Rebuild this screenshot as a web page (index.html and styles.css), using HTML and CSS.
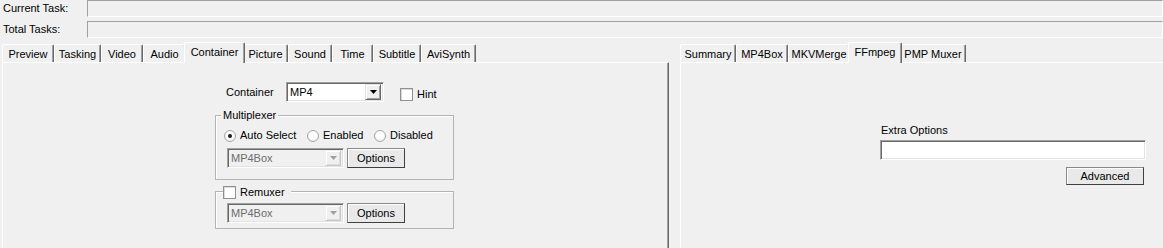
FILE: index.html
```html
<!DOCTYPE html>
<html>
<head>
  <title>Container Settings</title>
  <link rel="stylesheet" href="styles.css">
</head>
<body>
  <div class="status">
    <div class="status-row">
      <span class="status-label">Current Task:</span>
      <div class="bar"></div>
    </div>
    <div class="status-row">
      <span class="status-label">Total Tasks:</span>
      <div class="bar"></div>
    </div>
  </div>

  <div class="panes">
    <div class="tabctl tabctl-left">
      <div class="tabstrip">
        <div class="tab">Preview</div>
        <div class="tab">Tasking</div>
        <div class="tab">Video</div>
        <div class="tab">Audio</div>
        <div class="tab active">Container</div>
        <div class="tab">Picture</div>
        <div class="tab">Sound</div>
        <div class="tab">Time</div>
        <div class="tab">Subtitle</div>
        <div class="tab">AviSynth</div>
      </div>
      <div class="page">
        <div class="container-form">
          <div class="field-row">
            <span class="field-label">Container</span>
            <div class="combo combo-container">
              <span class="combo-text">MP4</span>
              <span class="combo-btn">
                <svg width="7" height="4" viewBox="0 0 7 4"><polygon points="0,0 7,0 3.5,4" fill="#000"/></svg>
              </span>
            </div>
            <label class="hint">
              <span class="check"></span>
              <span>Hint</span>
            </label>
          </div>

          <div class="group group-mux">
            <div class="group-title">Multiplexer</div>
            <div class="radio-row">
              <label class="radio-item radio-auto"><span class="radio checked"></span>Auto Select</label>
              <label class="radio-item radio-enabled"><span class="radio"></span>Enabled</label>
              <label class="radio-item"><span class="radio"></span>Disabled</label>
            </div>
            <div class="tool-row">
              <div class="combo combo-tool disabled">
                <span class="combo-text">MP4Box</span>
                <span class="combo-btn">
                  <svg width="7" height="4" viewBox="0 0 7 4"><polygon points="0,0 7,0 3.5,4" fill="#a0a0a0"/></svg>
                </span>
              </div>
              <button type="button" class="btn btn-options">Options</button>
            </div>
          </div>

          <div class="group group-remux">
            <div class="group-title"><span class="check"></span>Remuxer</div>
            <div class="tool-row">
              <div class="combo combo-tool disabled">
                <span class="combo-text">MP4Box</span>
                <span class="combo-btn">
                  <svg width="7" height="4" viewBox="0 0 7 4"><polygon points="0,0 7,0 3.5,4" fill="#a0a0a0"/></svg>
                </span>
              </div>
              <button type="button" class="btn btn-options">Options</button>
            </div>
          </div>
        </div>
      </div>
    </div>

    <div class="tabctl tabctl-right">
      <div class="tabstrip">
        <div class="tab">Summary</div>
        <div class="tab">MP4Box</div>
        <div class="tab">MKVMerge</div>
        <div class="tab active">FFmpeg</div>
        <div class="tab">PMP Muxer</div>
      </div>
      <div class="page page-right">
        <div class="extra">
          <div class="extra-label">Extra Options</div>
          <input type="text" class="textbox">
          <button type="button" class="btn btn-advanced">Advanced</button>
        </div>
      </div>
    </div>
  </div>
</body>
</html>
```

FILE: styles.css
```css
/* classic windows form look */
body {
  margin: 0;
  background-color: #f0f0f0;
  font-family: "Liberation Sans", Arial, sans-serif;
  font-size: 11px;
  color: #000;
  height: 248px;
  overflow: hidden;
}

/* progress rows */
.status-row {
  display: flex;
  align-items: center;
  height: 17px;
  margin-bottom: 4px;
}

.status-label {
  width: 84px;
  padding-left: 3px;
  line-height: 13px;
  margin-top: -1px;
}

.bar {
  flex: 1;
  height: 17px;
  box-sizing: border-box;
  border: 1px solid;
  border-color: #a0a0a0 #fff #fff #a0a0a0;
}

/* tab controls */
.panes {
  display: flex;
  height: 206px;
}

.tabctl {
  display: flex;
  flex-direction: column;
}

.tabctl-left {
  margin-left: 2px;
  width: 667px;
}

.tabctl-right {
  margin-left: 11px;
  flex: 1;
}

.tabstrip {
  display: flex;
  align-items: flex-end;
  height: 20px;
  position: relative;
  z-index: 1;
}

.tab {
  box-sizing: border-box;
  height: 18px;
  padding-top: 2px;
  line-height: 15px;
  text-align: center;
  white-space: nowrap;
  border-top: 1px solid #fff;
  border-left: 1px solid #fff;
  border-right: 1px solid #696969;
  box-shadow: inset -1px 0 #a0a0a0;
  background-color: #f0f0f0;
  border-top-left-radius: 2px;
  border-top-right-radius: 2px;
}

.tab.active {
  height: 21px;
  margin: 0 -2px -1px -2px;
  position: relative;
  z-index: 2;
}

.tabctl-left .tab:nth-child(1) { width: 52px; }
.tabctl-left .tab:nth-child(2) { width: 47px; }
.tabctl-left .tab:nth-child(3) { width: 42px; }
.tabctl-left .tab:nth-child(4) { width: 43px; }
.tabctl-left .tab:nth-child(5) { width: 61px; }
.tabctl-left .tab:nth-child(6) { width: 45px; }
.tabctl-left .tab:nth-child(7) { width: 44px; }
.tabctl-left .tab:nth-child(8) { width: 41px; }
.tabctl-left .tab:nth-child(9) { width: 48px; }
.tabctl-left .tab:nth-child(10) { width: 55px; }

.tabctl-right .tab:nth-child(1) { width: 56px; }
.tabctl-right .tab:nth-child(2) { width: 52px; }
.tabctl-right .tab:nth-child(3) { width: 62px; }
.tabctl-right .tab:nth-child(4) { width: 54px; }
.tabctl-right .tab:nth-child(5) { width: 66px; }

.page {
  flex: 1;
  border-top: 1px solid #fff;
  border-left: 1px solid #fff;
  border-right: 1px solid #696969;
  box-shadow: inset -1px 0 #a0a0a0;
}

.page-right {
  border-right: none;
  box-shadow: none;
}

/* container page */
.container-form {
  margin-left: 212px;
  width: 239px;
  padding-top: 19px;
}

.field-row {
  display: flex;
  align-items: center;
  height: 20px;
  padding-left: 11px;
}

.field-label {
  width: 60px;
}

.combo {
  box-sizing: border-box;
  height: 20px;
  display: flex;
  align-items: center;
  justify-content: space-between;
  border: 1px solid;
  border-color: #a0a0a0 #fff #fff #a0a0a0;
  box-shadow: inset 1px 1px #696969, inset -1px -1px #e3e3e3;
  background-color: #fff;
  padding: 2px;
}

.combo-container {
  width: 98px;
}

.combo-tool {
  width: 117px;
}

.combo.disabled {
  background-color: #f0f0f0;
  color: #6d6d6d;
}

.combo-text {
  padding-left: 1px;
  line-height: 13px;
}

.combo-btn {
  box-sizing: border-box;
  width: 16px;
  height: 16px;
  display: flex;
  align-items: center;
  justify-content: center;
  background-color: #f0f0f0;
  border: 1px solid;
  border-color: #e3e3e3 #696969 #696969 #e3e3e3;
  box-shadow: inset 1px 1px #fff, inset -1px -1px #a0a0a0;
}

.combo.disabled .combo-btn {
  border-color: #f0f0f0 #c8c8c8 #c8c8c8 #f0f0f0;
  box-shadow: inset 1px 1px #fff, inset -1px -1px #dcdcdc;
}

.check {
  box-sizing: border-box;
  display: inline-block;
  width: 13px;
  height: 13px;
  border: 1px solid #8e8f8f;
  background-color: #fff;
  box-shadow: inset 1px 1px #dcdcdc;
}

.hint {
  display: flex;
  align-items: center;
  margin-left: 16px;
  margin-top: 4px;
  line-height: 13px;
}

.hint .check {
  margin-right: 4px;
}

/* group boxes */
.group {
  border: 1px solid #b4b4b4;
  box-shadow: inset 1px 1px #fff;
}

.group-mux {
  margin-top: 13px;
  padding-bottom: 11px;
}

.group-remux {
  margin-top: 11px;
  padding-bottom: 5px;
}

.group-title {
  display: flex;
  align-items: center;
  width: fit-content;
  height: 13px;
  line-height: 13px;
  background-color: #f0f0f0;
}

.group-mux .group-title {
  margin: -7px 0 0 5px;
  padding: 0 2px;
}

.group-remux .group-title {
  margin: -6px 0 0 7px;
  padding-right: 6px;
}

.group-remux .group-title .check {
  margin-right: 4px;
}

.radio-row {
  display: flex;
  margin-top: 7px;
  padding-left: 8px;
  height: 13px;
  line-height: 13px;
}

.radio-item {
  display: flex;
  align-items: center;
}

.radio-auto { width: 83px; }
.radio-enabled { width: 67px; }

.radio {
  box-sizing: border-box;
  width: 12px;
  height: 12px;
  margin-right: 4px;
  border-radius: 50%;
  border: 1px solid #a6a6a6;
  background: radial-gradient(circle at 50% 40%, #fff 40%, #e6e6e6 100%);
  display: flex;
  align-items: center;
  justify-content: center;
}

.radio.checked::after {
  content: "";
  width: 4px;
  height: 4px;
  border-radius: 50%;
  background-color: #1b1b1b;
}

.tool-row {
  display: flex;
  padding-left: 11px;
  margin-top: 6px;
}

.group-remux .tool-row {
  margin-top: 4px;
}

.btn {
  box-sizing: border-box;
  font-family: inherit;
  font-size: 11px;
  color: #000;
  background-color: #e9e9e9;
  border: 1px solid;
  border-color: #8a8a8a #3f3f3f #3f3f3f #8a8a8a;
  box-shadow: inset 1px 1px #fff;
  padding: 0;
  line-height: 13px;
}

.btn-options {
  width: 58px;
  height: 20px;
  margin-left: 3px;
}

/* ffmpeg page */
.extra {
  margin-left: 199px;
  padding-top: 61px;
  display: flex;
  flex-direction: column;
  align-items: flex-start;
}

.extra-label {
  line-height: 13px;
  padding-left: 1px;
}

.textbox {
  box-sizing: border-box;
  width: 266px;
  height: 20px;
  margin: 3px 0 0 0;
  border: 1px solid;
  border-color: #a0a0a0 #fff #fff #a0a0a0;
  box-shadow: inset 1px 1px #696969, inset -1px -1px #e3e3e3;
  background-color: #fff;
  outline: none;
}

.btn-advanced {
  width: 78px;
  height: 18px;
  margin: 7px 0 0 186px;
}
```
